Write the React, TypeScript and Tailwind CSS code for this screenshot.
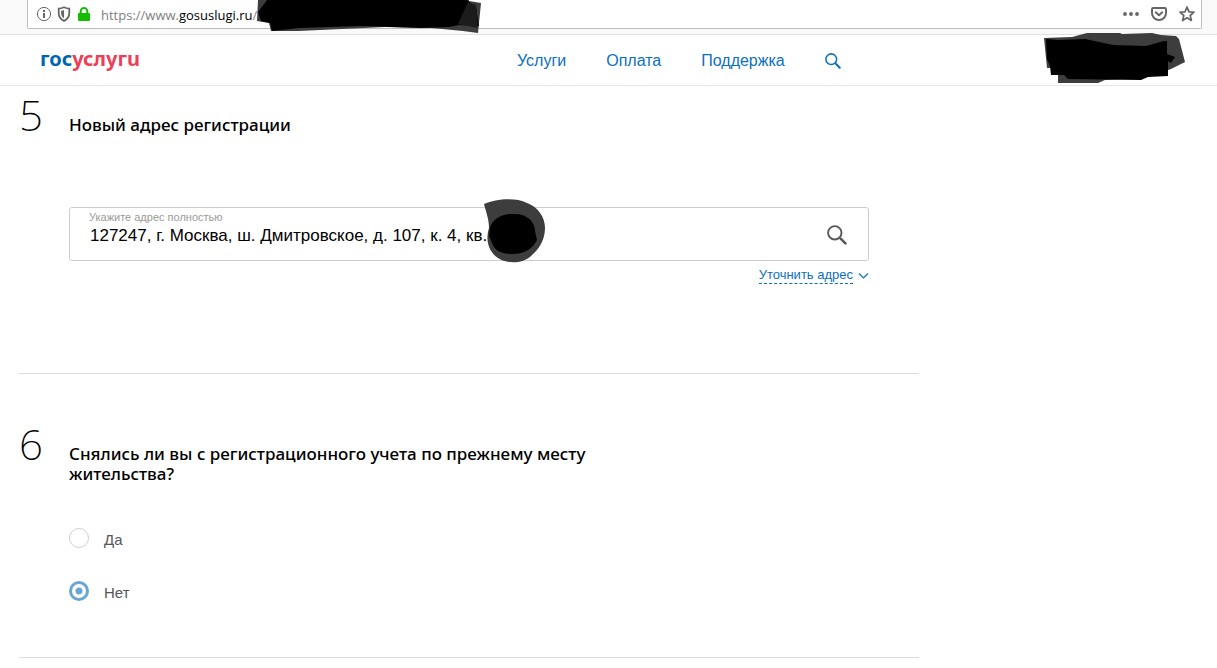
import React from 'react';

interface QuestionProps {
  number: number;
  title: string;
  className?: string;
  children: React.ReactNode;
}

const SearchIcon: React.FC<{ className?: string }> = ({ className }) => (
  <svg viewBox="0 0 20 20" className={className} fill="none" stroke="currentColor" aria-hidden="true">
    <circle cx="7.8" cy="7.8" r="6.7" strokeWidth="1.9" />
    <path d="M12.6 12.6l2 2" strokeWidth="1.8" />
    <path d="M14.2 14.2l4.2 4.2" strokeWidth="2.6" strokeLinecap="round" />
  </svg>
);

const AddressBar = () => (
  <div className="flex h-[35px] border-b border-[#e0e0e0] bg-[#f9f9fa] pr-[15px] pl-[27px]">
    <div className="flex h-[29px] flex-1 items-center rounded-b-xs border-x border-b border-[#bdbdbd] bg-white px-2 text-[#666666]">
      <svg viewBox="0 0 16 16" className="size-4" aria-hidden="true">
        <circle cx="8" cy="8" r="6.6" fill="none" stroke="currentColor" strokeWidth="1" />
        <path d="M7 4h2v2H7zM7 7h2v5H7z" fill="currentColor" />
      </svg>
      <svg viewBox="0 0 16 16" className="ml-1 size-4" aria-hidden="true">
        <path d="M8 1.3c2 .9 3.6 1.3 5.3 1.3v4.200c0 4-1.700 6.600-5.300 8.100-3.600-1.500-5.300-4.100-5.300-8.100V2.600C4.400 2.600 6 2.200 8 1.300z" fill="none" stroke="currentColor" strokeWidth="1.8" />
        <path d="M8 4v8.300c-2-1.200-2.900-3-2.900-5.500V4.700C6.200 4.600 7.100 4.400 8 4z" fill="currentColor" />
      </svg>
      <svg viewBox="0 0 16 16" className="ml-1 size-4 text-[#12bc00]" aria-hidden="true">
        <rect x="2" y="7" width="12" height="8" rx="1" fill="currentColor" />
        <path d="M4.700 8V5.200a3.300 3.300 0 0 1 6.600 0V8" fill="none" stroke="currentColor" strokeWidth="2" />
      </svg>
      <span className="ml-[9px] flex-1 pt-[3px] font-['Open_Sans',sans-serif] text-[13px] text-[#808080]">
        https://www.<span className="text-black">gosuslugi.ru</span>/
      </span>
      <button type="button" aria-label="Меню" className="mr-3">
        <svg viewBox="0 0 16 16" className="size-4" fill="currentColor">
          <circle cx="2" cy="8" r="1.9" />
          <circle cx="8" cy="8" r="1.9" />
          <circle cx="14" cy="8" r="1.9" />
        </svg>
      </button>
      <button type="button" aria-label="Pocket" className="mr-3">
        <svg viewBox="0 0 16 16" className="size-4" fill="none" stroke="currentColor" strokeWidth="2" strokeLinecap="round" strokeLinejoin="round">
          <path d="M2.200 2h11.600c.7 0 1.200.5 1.200 1.200V7A7 7 0 0 1 1 7V3.200C1 2.500 1.500 2 2.200 2z" />
          <path d="M4.700 6.300L8 9.300l3.300-3" />
        </svg>
      </button>
      <button type="button" aria-label="Закладка" className="-mr-[2px]">
        <svg viewBox="0 0 16 16" className="size-4" fill="none" stroke="currentColor" strokeWidth="1.7" strokeLinejoin="round">
          <path d="M8 1l2 4.800 5 .4-3.800 3.300 1.200 5L8 11.800l-4.400 2.700 1.200-5L1 6.200l5-.4z" />
        </svg>
      </button>
    </div>
    <svg width="226" height="33" className="absolute top-0 left-[257px]" aria-hidden="true">
      <path d="M1 0h211v1l12 2-3 30-15-2-31-3-47-1-65 3-22 1H14l-2-8-12-2z" fill="#3d3d3d" />
      <path d="M10 0h200l9 8 3 18-20-1-10 2-28 1-60-2-62 2-27 3-2-8-9-2-3-9z" fill="#000" />
      <path d="M211 2l8 3 2 23-20-4z" fill="#1c1c1c" />
    </svg>
  </div>
);

const Header = () => (
  <header className="relative flex h-[51px] items-center border-b border-[#e8e8e8] bg-white pl-10 font-['Liberation_Sans',sans-serif]">
    <a href="#" aria-label="госуслуги" className="w-[477px] pb-[2px] font-['Noto_Sans',sans-serif] text-xl leading-6 font-bold text-[#ee3f58]">
      <span className="text-[#0065b1]">гос</span>услугu
    </a>
    <nav className="flex items-center gap-10 pt-[2px] text-base text-[#0b70bd]">
      <a href="#">Услуги</a>
      <a href="#">Оплата</a>
      <a href="#">Поддержка</a>
      <button type="button" aria-label="Поиск">
        <SearchIcon className="size-4" />
      </button>
    </nav>
    <svg width="144" height="52" className="absolute -top-[2px] right-[30px]" aria-hidden="true">
      <path d="M1 5l28-1 15-4h33l2 1 30-1 9 2 15 1 3 3 6 23-14 7-8 3-20 6-38 2-7 3H15V42l-6-1v-6H4z" fill="#3d3d3d" />
      <path d="M3 6l12 1 27-1 28 6 33 1 18-5h3v13l8 3-4 6-3-2v15l-20 1-7 3-73-1-4-4H8l-1-9-3-7z" fill="#000" />
    </svg>
  </header>
);

const Question: React.FC<QuestionProps> = ({ number, title, className, children }) => (
  <section className={`flex border-b border-[#dcdcdc] ${className}`}>
    <div className="w-[50px] shrink-0 font-['Noto_Sans',sans-serif] text-[42px] leading-10 font-extralight text-black">{number}</div>
    <div className="min-w-0 flex-1 pt-5 pr-[50px]">
      <h2 className="max-w-[540px] font-['Noto_Sans',sans-serif] text-[17px] leading-5 font-medium text-black">{title}</h2>
      {children}
    </div>
  </section>
);

const RadioOption: React.FC<{ label: string; defaultChecked?: boolean }> = ({ label, defaultChecked }) => (
  <label className="flex h-5 items-center gap-[15px] text-[15px] text-[#56565a]">
    <input
      type="radio"
      name="deregistered"
      defaultChecked={defaultChecked}
      className="size-5 appearance-none rounded-full border border-[#cfcfcf] bg-white checked:border-[3px] checked:border-[#6ba6d3] checked:bg-[radial-gradient(circle,#6ba6d3_3px,white_4px)]"
    />
    <span className="pt-1">{label}</span>
  </label>
);

export default function App() {
  return (
    <div className="relative min-h-screen bg-white">
      <AddressBar />
      <Header />
      <main className="max-w-[919px] pl-[19px] font-['Liberation_Sans',sans-serif]">
        <Question number={5} title="Новый адрес регистрации" className="h-[288px] pt-[9px]">
          <div className="relative mt-[72px] flex h-[54px] rounded-[3px] border border-[#cdcdcf]">
            <label htmlFor="address" className="absolute top-[3px] left-[19px] text-[11px] leading-3 text-[#9b9b95]">
              Укажите адрес полностью
            </label>
            <input
              id="address"
              type="text"
              defaultValue="127247, г. Москва, ш. Дмитровское, д. 107, к. 4, кв."
              className="min-w-0 flex-1 pt-1 pl-5 text-[17px] text-black outline-none"
            />
            <button type="button" aria-label="Найти адрес" className="mr-[21px] pt-[2px] text-[#59595b]">
              <SearchIcon className="size-5" />
            </button>
            <svg width="64" height="66" className="absolute -top-[10px] left-[413px]" aria-hidden="true">
              <path d="M1 6c12-5 31-7 43-1 11 4 18 14 18 25 0 13-7 22-14 28-8 8-25 8-33 2C6 54 2 43 6 30 6 21 3 14 1 6z" fill="#3d3d3d" />
              <path d="M7 30c2-8 10-14 22-14 14-1 23 7 23 17l2 9c-5 10-14 14-25 14-13 0-18-5-20-11l-3-7z" fill="#000" />
            </svg>
          </div>
          <div className="mt-[6px] flex justify-end">
            <button type="button" className="flex items-start gap-[5px] text-[13px] leading-4 text-[#0b70bd]">
              <span className="border-b border-dashed border-[#0b70bd]">Уточнить адрес</span>
              <svg viewBox="0 0 11 16" className="h-4 w-[11px]" fill="none" stroke="currentColor" aria-hidden="true">
                <path d="M1 6.500l4.500 4.500L10 6.500" strokeWidth="1.2" />
              </svg>
            </button>
          </div>
        </Question>
        <Question number={6} title="Снялись ли вы с регистрационного учета по прежнему месту жительства?" className="h-[284px] pt-[50px]">
          <div className="mt-11 flex flex-col gap-[33px]">
            <RadioOption label="Да" />
            <RadioOption label="Нет" defaultChecked />
          </div>
        </Question>
      </main>
    </div>
  );
}
